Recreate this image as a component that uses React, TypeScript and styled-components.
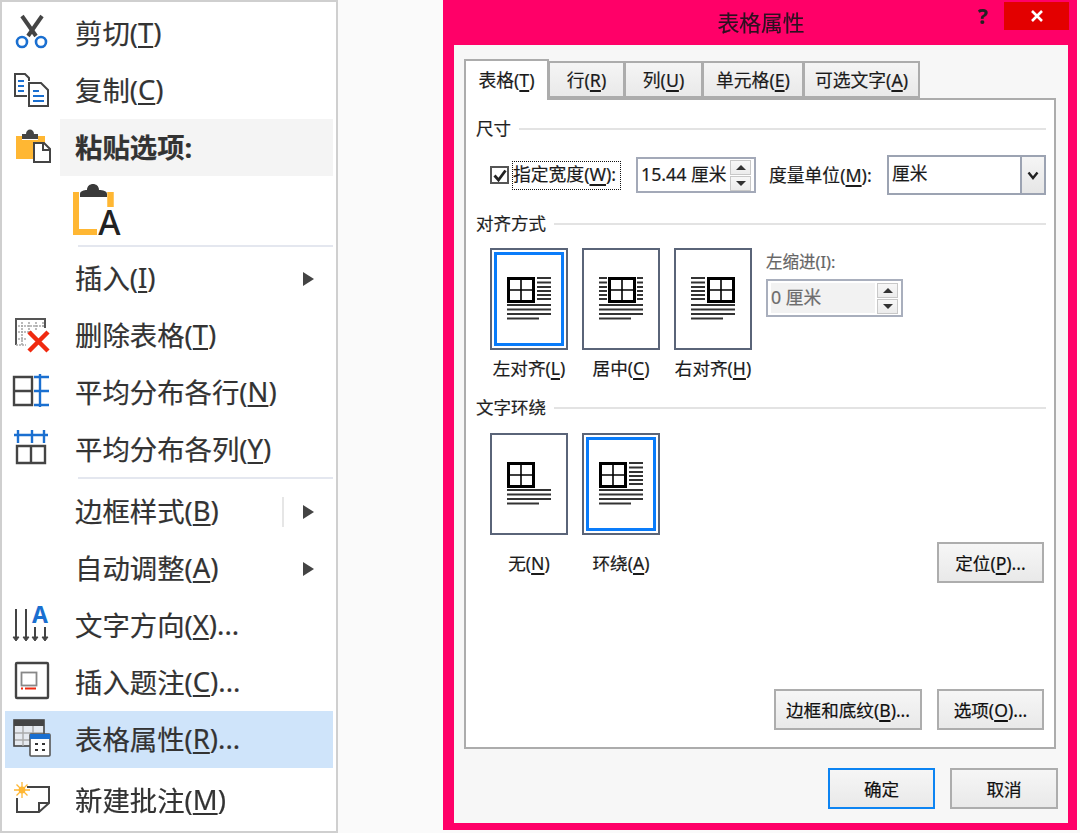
import React from 'react';
import styled, { createGlobalStyle } from 'styled-components';

const GlobalStyle = createGlobalStyle`
    html, body {
        margin: 0;
        padding: 0;
        background: #fafafa;
    }
    body {
        font-family: 'Noto Sans', 'Noto Sans CJK SC', sans-serif;
        color: #222;
    }
    * {
        box-sizing: border-box;
    }
`;

const Page = styled.div`
    display: flex;
    width: 1080px;
    height: 833px;
    overflow: hidden;
    filter: blur(0.3px);
    -webkit-text-stroke: 0.2px currentColor;
`;

const Menu = styled.div`
    width: 338px;
    height: 833px;
    padding: 3px 3px 0 3px;
    background: #fff;
    border: 2px solid #cfcfcf;
    flex-shrink: 0;
`;

const Row = styled.div<{ $active?: boolean }>`
    display: flex;
    align-items: center;
    height: 57px;
    background: ${({ $active }) => ($active ? '#cfe4fa' : 'transparent')};
    margin-bottom: ${({ $active }) => ($active ? '4px' : '0')};
    font-size: 27.4px;
    color: #333;
`;

const IconCell = styled.div`
    width: 55px;
    height: 44px;
    flex-shrink: 0;
    padding-left: 5px;
    svg {
        display: block;
        overflow: visible;
    }
`;

const RowLabel = styled.div<{ $bold?: boolean; $shaded?: boolean }>`
    display: flex;
    align-items: center;
    flex: 1;
    height: 100%;
    padding: 0 0 3px 15px;
    font-weight: ${({ $bold }) => ($bold ? 700 : 400)};
    background: ${({ $shaded }) => ($shaded ? '#f4f4f4' : 'transparent')};
    white-space: pre;
`;

const Key = styled.span`
    text-decoration: underline;
    text-decoration-thickness: 2px;
    text-underline-offset: 3px;
`;

const SubArrow = styled.div`
    width: 0;
    height: 0;
    margin-right: 19px;
    border-left: 11px solid #444;
    border-top: 7px solid transparent;
    border-bottom: 7px solid transparent;
`;

const ArrowDivider = styled.div`
    width: 2px;
    height: 30px;
    margin-right: 19px;
    background: #e6e6e6;
`;

const PasteRow = styled.div`
    height: 69px;
    padding: 7px 0 0 68px;
    svg {
        display: block;
        overflow: visible;
    }
`;

const Separator = styled.div<{ $lift?: number; $after?: number }>`
    height: 2px;
    margin: -${({ $lift }) => $lift ?? 0}px 0 ${({ $after }) => $after ?? 3}px 73px;
    background: #e4e7ef;
`;

const Dialog = styled.div`
    display: flex;
    flex-direction: column;
    width: 634px;
    height: 830px;
    margin-left: 105px;
    padding: 0 9px 7px 11px;
    background: #ff0068;
    flex-shrink: 0;
`;

const TitleBar = styled.div`
    display: grid;
    grid-template-columns: 1fr auto 1fr;
    height: 45px;
`;

const Title = styled.div`
    padding-top: 3px;
    font-size: 21.8px;
    line-height: 40px;
    color: #2b1020;
`;

const WindowControls = styled.div`
    display: flex;
    justify-content: flex-end;
    align-items: flex-start;
    padding-top: 2px;
    margin-right: -1px;
`;

const HelpButton = styled.div`
    width: 20px;
    margin-right: 11px;
    text-align: center;
    font-size: 21px;
    font-weight: 700;
    line-height: 28px;
    color: #222;
`;

const CloseButton = styled.div`
    display: flex;
    align-items: center;
    justify-content: center;
    width: 65px;
    height: 28px;
    background: #e30000;
`;

const Body = styled.div`
    display: flex;
    flex-direction: column;
    flex: 1;
    padding: 14px 10px 0;
    background: #f7f7f7;
`;

const TabStrip = styled.div`
    display: flex;
    align-items: flex-end;
    height: 39px;
    position: relative;
    z-index: 1;
`;

const Tab = styled.div<{ $active?: boolean; $width: number }>`
    width: ${({ $width }) => $width}px;
    height: ${({ $active }) => ($active ? '41px' : '37px')};
    margin-bottom: ${({ $active }) => ($active ? '-2px' : '0')};
    padding-top: ${({ $active }) => ($active ? '2px' : '0')};
    text-align: center;
    font-size: 17.8px;
    line-height: 34px;
    color: #1b1b1b;
    background: ${({ $active }) => ($active ? '#fff' : 'linear-gradient(#f5f5f5, #e9e9e9)')};
    border: 2px solid #acacac;
    border-bottom: ${({ $active }) => ($active ? 'none' : '2px solid #acacac')};
    margin-left: ${({ $active }) => ($active ? '0' : '-1px')};
    white-space: nowrap;
`;

const Pane = styled.div`
    display: flex;
    flex-direction: column;
    width: 592px;
    height: 651px;
    padding: 17px 8px 17px 10px;
    background: #fff;
    border: 2px solid #acacac;
`;

const SectionTitle = styled.div<{ $top?: number }>`
    display: flex;
    align-items: center;
    gap: 8px;
    height: 24px;
    margin-top: ${({ $top }) => $top ?? 0}px;
    padding-bottom: 3px;
    font-size: 17.5px;
    color: #1f1f1f;
    &::after {
        content: '';
        flex: 1;
        height: 2px;
        margin-top: 3px;
        background: #e3e3e3;
    }
`;

const SizeRow = styled.div`
    display: flex;
    align-items: center;
    height: 40px;
    margin-top: 14px;
    padding-left: 14px;
    font-size: 17.8px;
    color: #1b1b1b;
`;

const CheckBox = styled.div`
    display: flex;
    align-items: center;
    justify-content: center;
    width: 19px;
    height: 18px;
    border: 2px solid #555;
    background: #fff;
    flex-shrink: 0;
`;

const FocusLabel = styled.div`
    width: 109px;
    height: 29px;
    margin-left: 3px;
    line-height: 24px;
    border: 1px dotted #111;
    white-space: nowrap;
`;

const SpinBox = styled.div<{ $width: number; $height: number; $disabled?: boolean }>`
    display: flex;
    align-items: center;
    justify-content: space-between;
    width: ${({ $width }) => $width}px;
    height: ${({ $height }) => $height}px;
    padding: 0 3px;
    border: 2px solid ${({ $disabled }) => ($disabled ? '#a9afbd' : '#a3a9b8')};
    background: #fff;
    flex-shrink: 0;
    font-size: 17.8px;
    color: ${({ $disabled }) => ($disabled ? '#6d6d6d' : '#1b1b1b')};
`;

const WidthSpinBox = styled(SpinBox)`
    margin-left: 15px;
`;

const SpinText = styled.div<{ $disabled?: boolean }>`
    flex: 1;
    display: flex;
    align-items: center;
    height: calc(100% - 4px);
    margin: 2px 2px 2px 0;
    padding-bottom: 4px;
    background: ${({ $disabled }) => ($disabled ? '#f2f2f2' : 'transparent')};
    white-space: pre;
`;

const SpinButtons = styled.div`
    display: flex;
    flex-direction: column;
    gap: 1px;
    width: 21px;
    flex-shrink: 0;
`;

const SpinButton = styled.div<{ $down?: boolean }>`
    display: flex;
    align-items: center;
    justify-content: center;
    height: 15px;
    background: linear-gradient(#f7f7f7, #ececec);
    border: 1px solid #c8c8c8;
    &::after {
        content: '';
        width: 0;
        height: 0;
        border-left: 5px solid transparent;
        border-right: 5px solid transparent;
        ${({ $down }) => ($down ? 'border-top: 5px solid #333;' : 'border-bottom: 5px solid #333;')}
    }
`;

const UnitLabel = styled.div`
    width: 105px;
    margin-left: 13px;
    padding-bottom: 3px;
    white-space: nowrap;
`;

const ComboBox = styled.div`
    display: flex;
    align-items: stretch;
    width: 159px;
    height: 40px;
    margin-left: 13px;
    border: 2px solid #9ca3b2;
    background: #fff;
`;

const ComboText = styled.div`
    flex: 1;
    padding-left: 3px;
    line-height: 33px;
`;

const ComboButton = styled.div`
    display: flex;
    align-items: center;
    justify-content: center;
    width: 24px;
    border-left: 2px solid #9ca3b2;
    background: linear-gradient(#f5f5f5, #e6e6e6);
`;

const ChoiceRow = styled.div<{ $top: number }>`
    display: flex;
    gap: 14px;
    margin-top: ${({ $top }) => $top}px;
    padding-left: 14px;
`;

const Choice = styled.div`
    display: flex;
    flex-direction: column;
    align-items: center;
    width: 78px;
`;

const ChoiceCard = styled.div`
    width: 78px;
    height: 102px;
    svg {
        display: block;
    }
`;

const ChoiceLabel = styled.div<{ $gap: number }>`
    height: 24px;
    margin-top: ${({ $gap }) => $gap}px;
    font-size: 17.6px;
    line-height: 24px;
    white-space: nowrap;
    color: #1b1b1b;
`;

const IndentBlock = styled.div`
    display: flex;
    flex-direction: column;
    gap: 3px;
`;

const IndentLabel = styled.div`
    height: 28px;
    font-size: 16.5px;
    line-height: 28px;
    color: #666;
`;

const DialogButton = styled.div<{ $width: number; $default?: boolean; $top?: number }>`
    width: ${({ $width }) => $width}px;
    height: 41px;
    margin-top: ${({ $top }) => $top ?? 0}px;
    text-align: center;
    font-size: 17.6px;
    line-height: 38px;
    color: #111;
    border: 2px solid ${({ $default }) => ($default ? '#0d84f2' : '#adadad')};
    background: linear-gradient(#f6f6f6, #e9e9e9);
    flex-shrink: 0;
    white-space: nowrap;
`;

const PositionButton = styled(DialogButton)`
    margin-left: auto;
    margin-right: 2px;
`;

const PaneActions = styled.div`
    display: flex;
    justify-content: flex-end;
    gap: 15px;
    margin-top: auto;
    margin-right: 2px;
`;

const Footer = styled.div`
    display: flex;
    justify-content: flex-end;
    gap: 15px;
    margin-top: 19px;
`;

const DARK = '#444';
const BLUE = '#1a6fd0';
const ORANGE = '#ffb733';

const Icon: React.FC<{ children: React.ReactNode }> = ({ children }) => (
    <svg width="44" height="44" viewBox="0 0 44 44" fill="none">
        {children}
    </svg>
);

const ScissorsIcon = () => (
    <Icon>
        <path d="M12 4 L26 24" stroke={DARK} strokeWidth="4" />
        <path d="M32 4 L18 24" stroke={DARK} strokeWidth="4" />
        <circle cx="12" cy="30" r="5" stroke={BLUE} strokeWidth="2.6" />
        <circle cx="31" cy="30" r="5" stroke={BLUE} strokeWidth="2.6" />
    </Icon>
);

const CopyIcon = () => (
    <Icon>
        <path d="M17 27 H5 V5 H15 L19 9 V12" stroke={DARK} strokeWidth="2" />
        <path d="M19 14 H31 L38 21 V37 H19 Z" fill="#fff" stroke={DARK} strokeWidth="2" />
        <path d="M8 12 H14 M8 17 H14 M8 22 H14 M23 22 H29 M23 27 H34 M23 32 H34" stroke={BLUE} strokeWidth="2" />
    </Icon>
);

const PasteIcon = () => (
    <Icon>
        <path d="M6 10 H12 V14 H28 V10 H35 V18 H23 V33 H6 Z" fill={ORANGE} />
        <path d="M12 8 H16 C16 2 24 2 24 8 H28 V13 H12 Z" fill={DARK} />
        <path d="M24 17 H34 L40 23 V36 H24 Z" fill="#fff" stroke={DARK} strokeWidth="2" />
        <path d="M33 17 V24 H40" stroke={DARK} strokeWidth="2" />
    </Icon>
);

const DeleteTableIcon = () => (
    <Icon>
        <path d="M6 31 V5 H35 V14" stroke="#555" strokeWidth="2" />
        <path d="M6 31 H16 M12 8 V31 M19 8 V20 M26 8 V16 M33 8 V14 M8 12 H35 M8 18 H22 M8 25 H16" stroke="#aaa" strokeWidth="1.6" strokeDasharray="2 1" />
        <path d="M19 18 L38 37 M38 18 L19 37" stroke="#f02a10" strokeWidth="4.5" />
    </Icon>
);

const DistributeRowsIcon = () => (
    <Icon>
        <path d="M4 6 H22 V34 H4 Z M4 20 H22" stroke={DARK} strokeWidth="2.4" />
        <path d="M30 3 V36 M24 6 H39 M24 20 H39 M24 34 H39" stroke={BLUE} strokeWidth="2.4" />
    </Icon>
);

const DistributeColumnsIcon = () => (
    <Icon>
        <path d="M7 18 H35 V35 H7 Z M21 18 V35" stroke={DARK} strokeWidth="2.4" />
        <path d="M4 7 H38 M8 2 V15 M22 2 V15 M34 2 V15" stroke={BLUE} strokeWidth="2.4" />
    </Icon>
);

const TextDirectionIcon = () => (
    <Icon>
        <path d="M6 5 V35 M16 5 V35 M25 23 V35 M35 23 V35" stroke={DARK} strokeWidth="2" />
        <path d="M3 33 L6 37 L9 33 Z M13 33 L16 37 L19 33 Z M22 33 L25 37 L28 33 Z M32 33 L35 37 L38 33 Z" fill={DARK} stroke={DARK} />
        <text x="30" y="19" textAnchor="middle" fontFamily="'Noto Sans', sans-serif" fontSize="23" fontWeight="700" fill={BLUE}>
            A
        </text>
    </Icon>
);

const CaptionIcon = () => (
    <Icon>
        <rect x="6" y="2" width="32" height="35" rx="1" stroke={DARK} strokeWidth="2.4" />
        <rect x="11.5" y="11.5" width="15" height="13" stroke="#888" strokeWidth="1.8" />
        <path d="M15 27.5 H26" stroke="#f02a10" strokeWidth="2" />
        <path d="M11 27.5 H13" stroke="#f02a10" strokeWidth="2" />
    </Icon>
);

const TablePropsIcon = () => (
    <Icon>
        <rect x="4" y="2" width="30" height="26" fill="#e6eaf0" stroke="#444" strokeWidth="1.6" />
        <rect x="4" y="2" width="30" height="6" fill="#444" />
        <path d="M5 15 H33 M5 22 H33 M13 8 V28 M23 8 V28" stroke="#aaa" strokeWidth="1.4" />
        <rect x="20" y="16" width="20" height="22" rx="1" fill="#fff" stroke="#555" strokeWidth="1.6" />
        <rect x="20" y="16" width="20" height="5" fill="#1a6fd0" />
        <path d="M25 26 H28 M32 26 H35 M25 32 H28 M32 32 H35" stroke="#333" strokeWidth="2.2" />
    </Icon>
);

const CommentIcon = () => (
    <Icon>
        <path d="M17 8 H39 V24 L29 33 H7 V19" stroke={DARK} strokeWidth="2" />
        <path d="M29 33 V24 H39" stroke={DARK} strokeWidth="2" />
        <circle cx="12" cy="11" r="3.4" fill={ORANGE} />
        <path d="M12 3 V19 M4 11 H20 M6.5 5.5 L17.5 16.5 M17.5 5.5 L6.5 16.5" stroke={ORANGE} strokeWidth="1.3" />
    </Icon>
);

const BigPasteIcon = () => (
    <svg width="52" height="62" viewBox="0 0 52 62" fill="none">
        <path d="M3 9 V49 H24" stroke={ORANGE} strokeWidth="6" />
        <path d="M37.5 9 V24" stroke={ORANGE} strokeWidth="6.5" />
        <path d="M7 14 V11 C7 8 11 7 14 7 C14 -1 26 -1 26 7 C30 7 34 8 34 11 V14 Z" fill="#3a3a3a" />
        <text x="36.5" y="52" textAnchor="middle" fontFamily="'Noto Sans', sans-serif" fontSize="34" fontWeight="500" fill="#222">
            A
        </text>
    </svg>
);

type Variant = 'left' | 'center' | 'right' | 'none';

const SIDE_ROWS = [30, 34.5, 39, 43, 47, 51];
const BODY_ROWS = [57, 61.5, 66, 70.5];

const layoutCard: Record<Variant, { gridX: number; sides: [number, number][] }> = {
    left: { gridX: 17, sides: [[47, 61]] },
    center: {
        gridX: 26,
        sides: [
            [17, 25],
            [55, 61],
        ],
    },
    right: { gridX: 33, sides: [[17, 31]] },
    none: { gridX: 17, sides: [] },
};

const ChoiceGlyph: React.FC<{ variant: Variant; selected?: boolean }> = ({ variant, selected }) => {
    const { gridX, sides } = layoutCard[variant];
    return (
        <svg width="78" height="102" viewBox="0 0 78 102" fill="none">
            <rect x="1" y="1" width="76" height="100" fill="#fff" stroke="#5a6478" strokeWidth="2" />
            {selected && <rect x="5.5" y="5.5" width="67" height="91" stroke="#0a7cfa" strokeWidth="3" />}
            <rect x={gridX + 1.5} y="30.5" width="25" height="23" stroke="#000" strokeWidth="3" />
            <path d={`M${gridX + 14} 30 V54 M${gridX} 42 H${gridX + 28}`} stroke="#000" strokeWidth="1.6" />
            {sides.map(([from, to]) =>
                SIDE_ROWS.map((y) => <path key={`${from}-${y}`} d={`M${from} ${y} H${to}`} stroke="#333" strokeWidth="2" />),
            )}
            {BODY_ROWS.map((y, index) => (
                <path key={y} d={`M17 ${y} H${index === 3 ? 49 : 61}`} stroke="#333" strokeWidth="2" />
            ))}
        </svg>
    );
};

const Spinner = () => (
    <SpinButtons>
        <SpinButton />
        <SpinButton $down />
    </SpinButtons>
);

const App: React.FC = () => (
    <>
        <GlobalStyle />
        <Page>
            <Menu>
                <Row>
                    <IconCell><ScissorsIcon /></IconCell>
                    <RowLabel>剪切(<Key>T</Key>)</RowLabel>
                </Row>
                <Row>
                    <IconCell><CopyIcon /></IconCell>
                    <RowLabel>复制(<Key>C</Key>)</RowLabel>
                </Row>
                <Row>
                    <IconCell><PasteIcon /></IconCell>
                    <RowLabel $bold $shaded>粘贴选项:</RowLabel>
                </Row>
                <PasteRow><BigPasteIcon /></PasteRow>
                <Separator />
                <Row>
                    <IconCell />
                    <RowLabel>插入(<Key>I</Key>)</RowLabel>
                    <SubArrow />
                </Row>
                <Row>
                    <IconCell><DeleteTableIcon /></IconCell>
                    <RowLabel>删除表格(<Key>T</Key>)</RowLabel>
                </Row>
                <Row>
                    <IconCell><DistributeRowsIcon /></IconCell>
                    <RowLabel>平均分布各行(<Key>N</Key>)</RowLabel>
                </Row>
                <Row>
                    <IconCell><DistributeColumnsIcon /></IconCell>
                    <RowLabel>平均分布各列(<Key>Y</Key>)</RowLabel>
                </Row>
                <Separator $lift={1} $after={4} />
                <Row>
                    <IconCell />
                    <RowLabel>边框样式(<Key>B</Key>)</RowLabel>
                    <ArrowDivider />
                    <SubArrow />
                </Row>
                <Row>
                    <IconCell />
                    <RowLabel>自动调整(<Key>A</Key>)</RowLabel>
                    <SubArrow />
                </Row>
                <Row>
                    <IconCell><TextDirectionIcon /></IconCell>
                    <RowLabel>文字方向(<Key>X</Key>)...</RowLabel>
                </Row>
                <Row>
                    <IconCell><CaptionIcon /></IconCell>
                    <RowLabel>插入题注(<Key>C</Key>)...</RowLabel>
                </Row>
                <Row $active>
                    <IconCell><TablePropsIcon /></IconCell>
                    <RowLabel>表格属性(<Key>R</Key>)...</RowLabel>
                </Row>
                <Row>
                    <IconCell><CommentIcon /></IconCell>
                    <RowLabel>新建批注(<Key>M</Key>)</RowLabel>
                </Row>
            </Menu>

            <Dialog>
                <TitleBar>
                    <div />
                    <Title>表格属性</Title>
                    <WindowControls>
                        <HelpButton>?</HelpButton>
                        <CloseButton>
                            <svg width="14" height="14" viewBox="0 0 14 14">
                                <path d="M2 2 L12 12 M12 2 L2 12" stroke="#fff" strokeWidth="2.6" />
                            </svg>
                        </CloseButton>
                    </WindowControls>
                </TitleBar>
                <Body>
                    <TabStrip>
                        <Tab $active $width={85}>表格(<Key>T</Key>)</Tab>
                        <Tab $width={77}>行(<Key>R</Key>)</Tab>
                        <Tab $width={79}>列(<Key>U</Key>)</Tab>
                        <Tab $width={102}>单元格(<Key>E</Key>)</Tab>
                        <Tab $width={117}>可选文字(<Key>A</Key>)</Tab>
                    </TabStrip>
                    <Pane>
                        <SectionTitle>尺寸</SectionTitle>
                        <SizeRow>
                            <CheckBox>
                                <svg width="14" height="13" viewBox="0 0 14 13">
                                    <path d="M1.5 6.5 L5.5 11 L12.5 1.5" stroke="#222" strokeWidth="2.8" fill="none" />
                                </svg>
                            </CheckBox>
                            <FocusLabel>指定宽度(<Key>W</Key>):</FocusLabel>
                            <WidthSpinBox $width={120} $height={36}>
                                <SpinText>15.44 厘米</SpinText>
                                <Spinner />
                            </WidthSpinBox>
                            <UnitLabel>度量单位(<Key>M</Key>):</UnitLabel>
                            <ComboBox>
                                <ComboText>厘米</ComboText>
                                <ComboButton>
                                    <svg width="12" height="9" viewBox="0 0 12 9">
                                        <path d="M1.5 1.5 L6 7 L10.5 1.5" stroke="#222" strokeWidth="2.4" fill="none" />
                                    </svg>
                                </ComboButton>
                            </ComboBox>
                        </SizeRow>

                        <SectionTitle $top={17}>对齐方式</SectionTitle>
                        <ChoiceRow $top={12}>
                            <Choice>
                                <ChoiceCard><ChoiceGlyph variant="left" selected /></ChoiceCard>
                                <ChoiceLabel $gap={6}>左对齐(<Key>L</Key>)</ChoiceLabel>
                            </Choice>
                            <Choice>
                                <ChoiceCard><ChoiceGlyph variant="center" /></ChoiceCard>
                                <ChoiceLabel $gap={6}>居中(<Key>C</Key>)</ChoiceLabel>
                            </Choice>
                            <Choice>
                                <ChoiceCard><ChoiceGlyph variant="right" /></ChoiceCard>
                                <ChoiceLabel $gap={6}>右对齐(<Key>H</Key>)</ChoiceLabel>
                            </Choice>
                            <IndentBlock>
                                <IndentLabel>左缩进(I):</IndentLabel>
                                <SpinBox $width={137} $height={38} $disabled>
                                    <SpinText $disabled>0 厘米</SpinText>
                                    <Spinner />
                                </SpinBox>
                            </IndentBlock>
                        </ChoiceRow>

                        <SectionTitle $top={16}>文字环绕</SectionTitle>
                        <ChoiceRow $top={13}>
                            <Choice>
                                <ChoiceCard><ChoiceGlyph variant="none" /></ChoiceCard>
                                <ChoiceLabel $gap={16}>无(<Key>N</Key>)</ChoiceLabel>
                            </Choice>
                            <Choice>
                                <ChoiceCard><ChoiceGlyph variant="left" selected /></ChoiceCard>
                                <ChoiceLabel $gap={16}>环绕(<Key>A</Key>)</ChoiceLabel>
                            </Choice>
                            <PositionButton $width={107} $top={109}>定位(<Key>P</Key>)...</PositionButton>
                        </ChoiceRow>

                        <PaneActions>
                            <DialogButton $width={148}>边框和底纹(<Key>B</Key>)...</DialogButton>
                            <DialogButton $width={107}>选项(<Key>O</Key>)...</DialogButton>
                        </PaneActions>
                    </Pane>
                    <Footer>
                        <DialogButton $width={107} $default>确定</DialogButton>
                        <DialogButton $width={108}>取消</DialogButton>
                    </Footer>
                </Body>
            </Dialog>
        </Page>
    </>
);

export default App;
